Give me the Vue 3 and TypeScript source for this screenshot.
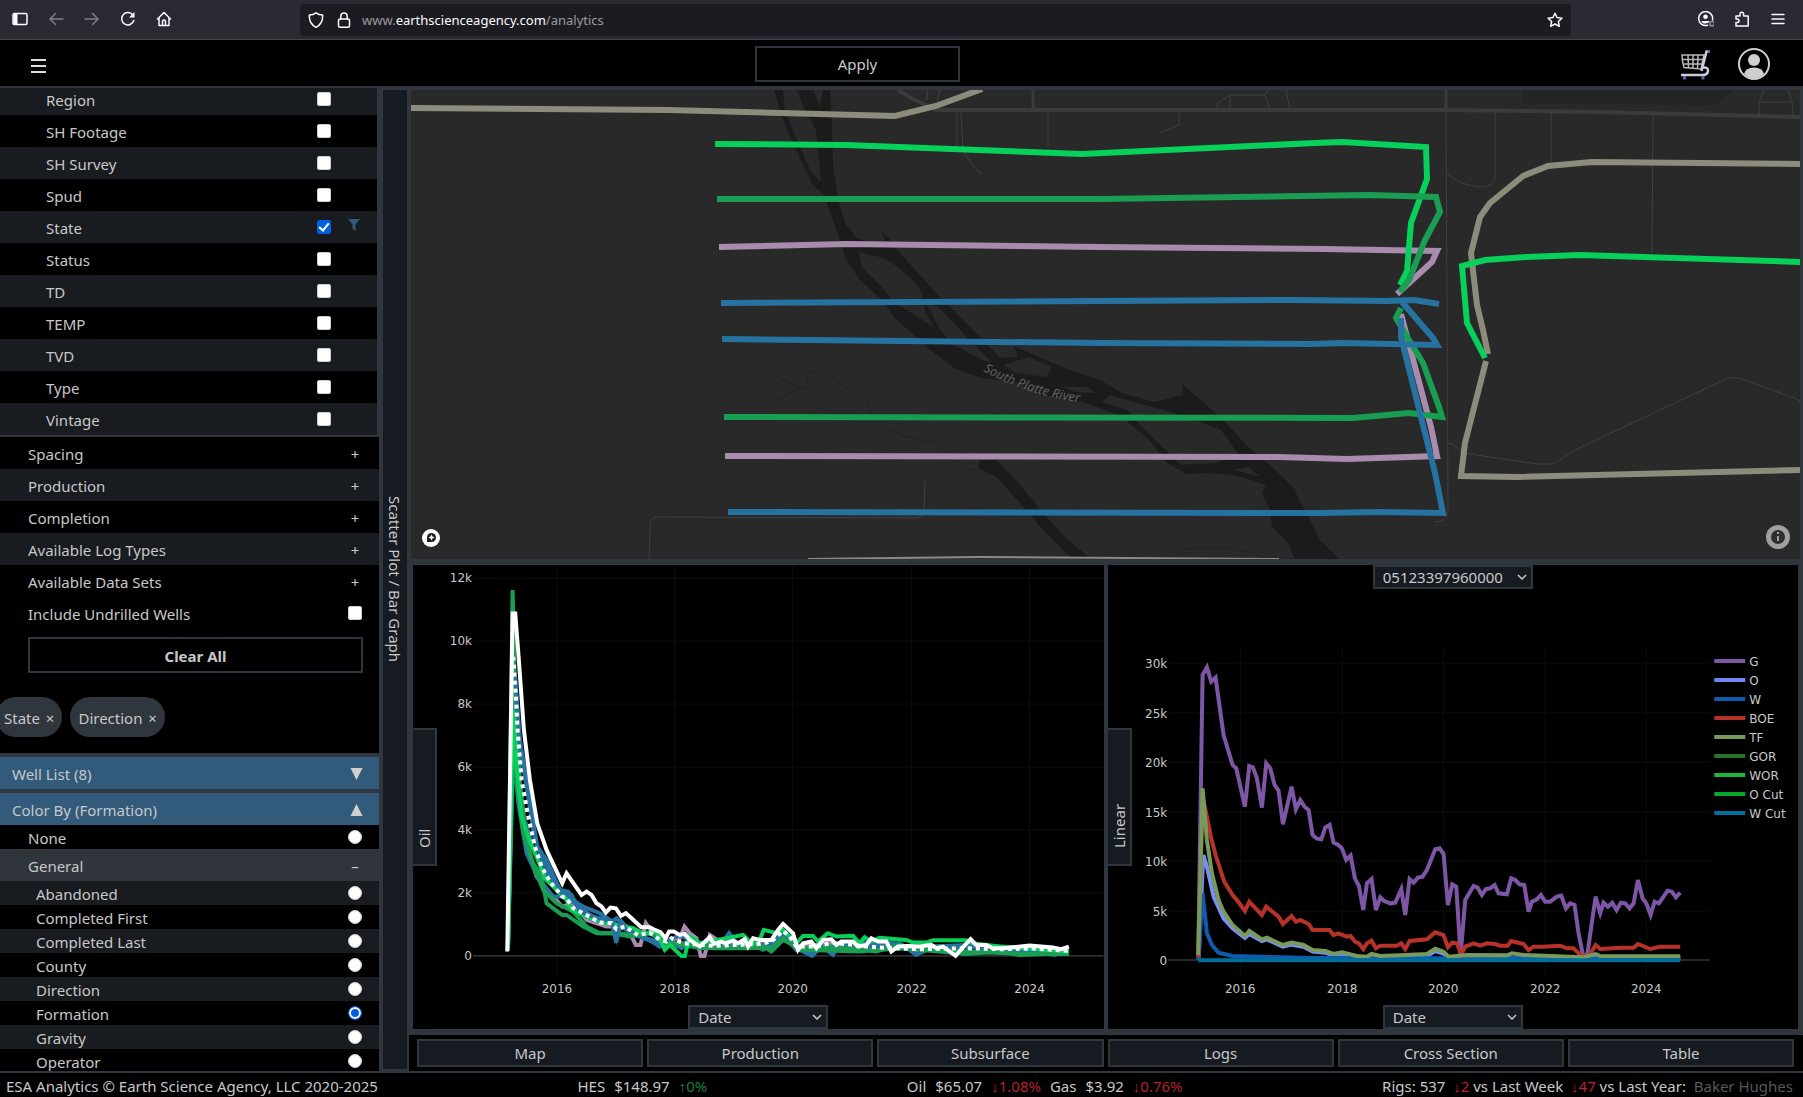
<script setup lang="ts">
import { ref } from 'vue'

interface Field { name: string; on: boolean }
interface Trace { color: string; points: string }
interface Tick { at: number; text: string }

const fields = ref<Field[]>([
  'Region', 'SH Footage', 'SH Survey', 'Spud', 'State', 'Status',
  'TD', 'TEMP', 'TVD', 'Type', 'Vintage',
].map((name) => ({ name, on: name === 'State' })))

const sections = ['Spacing', 'Production', 'Completion', 'Available Log Types', 'Available Data Sets']
const undrilled = ref(false)
const chips = ['State', 'Direction']

const colorBy = ref('Formation')
const colorOptions = ['Abandoned', 'Completed First', 'Completed Last', 'County', 'Direction', 'Formation', 'Gravity', 'Operator']
const views = ['Map', 'Production', 'Subsurface', 'Logs', 'Cross Section', 'Table']

const wells: Trace[] = [
  { color: '#8b8c7c', points: '411,108 668,110 895,116 936,106 982,89' },
  { color: '#8b8c7c', points: '1801,164 1592,162 1548,166 1523,176 1490,203 1480,217 1471,253 1477,305 1483,330 1488,354' },
  { color: '#8b8c7c', points: '1486,361 1465,443 1461,476 1517,477 1801,470' },
  { color: '#a98bae', points: '725,456 1279,457 1347,459 1437,456 1431,427 1401,314' },
  { color: '#179e51', points: '724,417 1353,418 1409,413 1442,417 1439,407 1423,363 1409,340 1396,318 1401,308' },
  { color: '#2673a1', points: '728,512 1320,513 1378,512 1443,513 1435,473 1401,337 1401,318' },
  { color: '#a98bae', points: '719,247 846,244 1100,247 1324,249 1437,251 1432,262 1397,294' },
  { color: '#2673a1', points: '722,339 1100,343 1311,344 1342,343 1437,345 1433,338 1402,302' },
  { color: '#2673a1', points: '721,303 1100,301 1293,300 1387,301 1414,300 1439,304' },
  { color: '#07d05b', points: '715,144 846,145 1082,154 1315,143 1342,142 1426,147 1427,179 1411,223 1407,271 1400,285' },
  { color: '#1a9e54', points: '717,199 1100,199 1369,195 1436,197 1440,212 1425,240 1409,280 1400,292' },
  { color: '#07d05b', points: '1801,262 1580,255 1526,257 1485,260 1462,266 1467,323 1485,358' },
]

const roads = [
  'M957,112 V146', 'M961,112 L963,150 Q970,164 982,175', 'M1048,112 V147', 'M928,90 L926,101', 'M940,90 L937,103',
  'M1179,112 V125 L1160,133', 'M1217,110 V104 L1230,95 H1265 L1270,110', 'M1230,95 V110', 'M1265,95 L1268,90',
  'M1286,90 L1290,110', 'M1446,110 L1448,512 Q1446,522 1434,522', 'M1495,112 V177 Q1494,187 1481,187 Q1462,186 1447,174',
  'M1551,112 V162', 'M1653,115 L1652,253', 'M1759,115 V102 L1764,90', 'M1788,90 L1792,102 L1793,115', 'M1759,102 H1792',
  'M1447,443 L1453,444 L1463,453 L1537,464 H1553 L1575,450 L1728,378 H1739 L1797,399 L1801,403',
  'M649,560 L650,527 Q650,518 656,517 L913,518 Q924,518 924,512 L925,481',
]
const creeks = [
  'M776,377 L800,387 L757,412',
  'M800,387 L806,388 L808,375 Q811,370 818,372 L831,377 L846,388 L864,398 Q871,405 871,413 L878,425 L904,436 L938,443 L951,460 L967,470 H983',
  'M1174,557 L1185,549 L1225,547 L1252,553 L1266,559',
]

// Series points are in thirds of a pixel, measured from each plot's own origin.
const oilTraces: Trace[] = [
  { color: '#a98bae', points: '324,1200 340,420 352,650 375,860 410,980 450,1030 487,1070 520,1060 560,1110 620,1130 680,1130 708,1185 722,1185 738,1120 760,1150 800,1170 840,1165 854,1130 870,1150 890,1165 903,1218 914,1218 930,1155 960,1175 1000,1185 1100,1180 1150,1150 1200,1190 1300,1180 1400,1185 1500,1190 1570,1205 1600,1190 1650,1188 1700,1192 1790,1190 1815,1208 1850,1195 2008,1200' },
  { color: '#2673a1', points: '324,1200 342,350 358,560 385,720 412,890 440,930 480,1020 505,1025 540,1075 580,1100 635,1115 650,1105 680,1135 720,1160 780,1185 840,1190 870,1170 930,1190 970,1175 988,1150 1010,1180 1080,1190 1130,1165 1150,1140 1175,1165 1195,1190 1240,1215 1260,1185 1300,1215 1320,1180 1400,1190 1500,1180 1550,1215 1600,1190 1713,1185 1760,1205 1850,1198 1965,1215 2008,1200' },
  { color: '#2673a1', points: '324,1200 341,450 352,640 372,800 400,900 430,960 470,1010 500,1045 540,1070 580,1110 635,1115 649,1178 665,1115 700,1155 740,1165 780,1190 810,1170 845,1195 880,1175 940,1190 1000,1180 1055,1180 1090,1200 1150,1160 1190,1195 1237,1218 1265,1190 1300,1190 1420,1175 1480,1180 1560,1200 1700,1190 1800,1200 2008,1205' },
  { color: '#2673a1', points: '324,1200 340,600 355,760 380,910 415,985 460,1040 500,1040 550,1070 600,1090 660,1130 720,1160 790,1180 840,1155 900,1190 1080,1185 1115,1180 1150,1155 1190,1200 1400,1195 1600,1195 1800,1190 2008,1200' },
  { color: '#1a9e54', points: '324,1200 338,120 346,440 360,700 380,880 405,960 430,1020 470,1060 520,1085 560,1130 600,1150 640,1150 690,1160 750,1150 800,1180 850,1185 900,1195 1000,1192 1100,1195 1115,1205 1150,1170 1200,1195 1300,1190 1430,1205 1500,1185 1560,1200 1700,1212 1800,1205 1860,1215 2008,1210' },
  { color: '#1a9e54', points: '324,1200 342,500 352,700 370,850 400,940 425,980 440,1060 487,1095 500,1095 550,1130 590,1150 650,1150 700,1155 770,1150 800,1180 880,1180 940,1195 1045,1195 1080,1190 1115,1195 1150,1165 1200,1200 1380,1205 1500,1195 1600,1200 1860,1212 2008,1212' },
  { color: '#07d05b', points: '324,1200 340,480 350,650 365,800 388,870 410,920 435,985 470,1020 500,1050 515,1080 560,1100 620,1120 700,1135 730,1150 770,1145 795,1200 810,1185 845,1218 855,1218 870,1160 900,1180 980,1165 1030,1155 1055,1180 1075,1180 1092,1140 1130,1150 1150,1140 1190,1180 1210,1158 1240,1158 1255,1175 1284,1150 1310,1160 1360,1158 1380,1180 1395,1162 1415,1175 1440,1164 1520,1170 1540,1178 1580,1178 1600,1171 1700,1171 1720,1180 1800,1190 2008,1205' },
  { color: '#2673a1', points: '346,380 362,600 385,740 405,870 430,935 460,985 487,1030 515,1035 540,1085 580,1100 635,1115 649,1165 662,1120 690,1150' },
]
const oilP90 = '322,1205 338,190 346,190 356,320 372,540 390,690 412,820 440,900 487,1000 500,970 545,1035 560,1025 575,1035 590,1060 605,1070 618,1088 632,1073 648,1075 663,1098 678,1090 692,1102 724,1132 750,1132 765,1140 782,1147 797,1165 808,1145 822,1145 840,1155 855,1152 870,1170 900,1190 930,1162 942,1182 965,1175 975,1180 1000,1172 1015,1180 1035,1168 1045,1190 1060,1165 1080,1170 1115,1170 1135,1140 1150,1122 1180,1150 1195,1200 1210,1180 1235,1175 1250,1195 1270,1170 1295,1168 1310,1185 1325,1175 1360,1175 1375,1190 1400,1185 1415,1165 1435,1175 1460,1175 1475,1205 1495,1190 1525,1188 1560,1190 1595,1185 1610,1195 1630,1190 1668,1218 1690,1192 1713,1168 1730,1185 1760,1185 1780,1195 1810,1195 1890,1187 1960,1193 1985,1198 2008,1190'
const oilMean = '340,320 348,440 353,540 365,690 383,790 405,890 425,950 450,995 487,1040 500,1045 520,1075 560,1095 600,1118 635,1120 650,1138 675,1130 715,1156 750,1148 780,1170 800,1175 815,1165 850,1180 940,1188 1080,1182 1115,1175 1150,1143 1170,1160 1190,1190 1250,1190 1300,1178 1400,1190 1480,1195 1560,1198 1700,1195 1800,1198 1900,1196 2008,1203'

const wellTraces: Trace[] = [
  { color: '#7d56a5', points: '294,1215 307,375 320,352 333,395 346,383 370,555 397,645 408,655 434,770 447,648 458,652 470,685 485,773 498,640 510,655 523,705 535,722 548,823 574,710 587,778 600,750 613,770 625,780 637,855 650,866 663,868 675,833 688,825 700,878 713,884 725,895 738,930 751,917 764,985 776,1008 789,1080 800,1000 814,987 827,1080 840,1042 852,1053 870,1060 885,1058 903,1017 915,1095 928,987 940,998 953,983 967,980 980,960 1005,898 1018,895 1030,912 1043,1065 1056,1003 1068,1010 1081,1215 1095,1050 1120,1008 1132,1013 1145,1035 1157,1017 1170,1015 1183,1005 1195,1030 1220,1033 1233,985 1245,990 1258,1003 1272,1005 1285,1085 1295,1055 1310,1048 1322,1035 1335,1055 1350,1055 1370,1040 1383,1037 1397,1075 1410,1060 1423,1065 1435,1150 1448,1215 1461,1215 1486,1040 1500,1090 1510,1058 1523,1070 1536,1058 1549,1080 1562,1058 1575,1060 1588,1075 1600,1060 1613,990 1627,1045 1638,1060 1651,1095 1663,1055 1676,1060 1702,1022 1715,1025 1727,1042 1740,1028' },
  { color: '#7b8df6', points: '295,1228 309,915 320,950 340,1040 370,1105 397,1135 434,1164 447,1152 485,1173 500,1168 548,1190 574,1184 610,1190 637,1205 675,1208 700,1216 725,1212 770,1222 980,1218 1005,1203 1030,1211 1045,1225 1740,1224' },
  { color: '#0f5cae', points: '295,1228 307,1030 320,1150 335,1185 355,1208 397,1218 600,1223 1740,1227' },
  { color: '#b7332a', points: '294,1222 307,740 320,800 333,865 346,915 372,995 397,1035 410,1050 434,1083 447,1055 485,1095 498,1070 535,1100 548,1122 574,1098 587,1115 600,1110 625,1122 637,1140 688,1140 700,1155 713,1150 740,1160 751,1158 764,1175 776,1180 789,1197 800,1180 814,1172 827,1195 840,1187 890,1187 903,1180 915,1197 928,1173 980,1168 1005,1147 1030,1155 1043,1192 1056,1178 1070,1180 1083,1215 1095,1190 1120,1180 1140,1187 1160,1180 1185,1182 1200,1187 1222,1187 1233,1173 1270,1182 1285,1200 1300,1190 1325,1190 1380,1187 1400,1195 1420,1195 1440,1215 1465,1220 1486,1185 1500,1197 1560,1193 1600,1193 1613,1182 1650,1197 1680,1190 1740,1190' },
  { color: '#789a5a', points: '294,1215 307,715 320,870 335,970 355,1050 370,1085 397,1125 434,1158 447,1143 485,1168 500,1163 548,1185 574,1178 610,1185 637,1200 675,1203 700,1212 725,1207 770,1218 800,1220 814,1212 840,1218 900,1216 980,1212 1005,1196 1030,1205 1045,1220 1100,1215 1220,1216 1235,1210 1270,1215 1450,1222 1486,1212 1500,1218 1740,1219' },
  { color: '#006f99', points: '294,1231 1740,1231' },
]

const legend = [
  { name: 'G', color: '#7d56a5' }, { name: 'O', color: '#6f86f5' }, { name: 'W', color: '#0f5cae' },
  { name: 'BOE', color: '#b7332a' }, { name: 'TF', color: '#789a5a' }, { name: 'GOR', color: '#25742a' },
  { name: 'WOR', color: '#1fb73a' }, { name: 'O Cut', color: '#06a52c' }, { name: 'W Cut', color: '#006f99' },
]

const oilY: Tick[] = ['0', '2k', '4k', '6k', '8k', '10k', '12k'].map((text, i) => ({ text, at: Math.round(956 - i * 63.05) }))
const oilX: Tick[] = ['2016', '2018', '2020', '2022', '2024'].map((text, i) => ({ text, at: Math.round(557 + i * 118.2) }))
const wellY: Tick[] = ['0', '5k', '10k', '15k', '20k', '25k', '30k'].map((text, i) => ({ text, at: Math.round(960 - i * 49.5) }))
const wellX: Tick[] = ['2016', '2018', '2020', '2022', '2024'].map((text, i) => ({ text, at: Math.round(1240 + i * 101.5) }))
</script>

<template>
  <div class="window">
    <div class="toolbar">
      <div class="tools">
        <button aria-label="Sidebar"><svg viewBox="0 0 16 16"><rect x="1" y="2.5" width="14" height="11" rx="1.5" class="line" /><path d="M1.5 2.5h4v11h-4z" class="solid" /></svg></button>
        <button aria-label="Back" class="dim"><svg viewBox="0 0 16 16"><path d="M15 8H2M7.5 2.500L2 8l5.500 5.500" class="line" /></svg></button>
        <button aria-label="Forward" class="dim"><svg viewBox="0 0 16 16"><path d="M1 8h13M8.500 2.500L14 8l-5.500 5.500" class="line" /></svg></button>
        <button aria-label="Reload"><svg viewBox="0 0 16 16"><path d="M13.800 9.500A6.200 6.200 0 1 1 12.800 4" class="line" /><path d="M14.500 1v5.500H9z" class="solid" /></svg></button>
        <button aria-label="Home"><svg viewBox="0 0 16 16"><path d="M1.500 8L8 1.500 14.500 8M3 7v7.500h10V7M6.500 14.500V10.500a1.500 1.500 0 0 1 3 0v4" class="line" /></svg></button>
      </div>
      <div class="address">
        <svg viewBox="0 0 16 16"><path d="M8 .8C10 2.300 12 2.900 14.600 3c.4 5.500-1.500 9.800-6.600 12.300C2.900 12.800 1 8.500 1.400 3 4 2.900 6 2.300 8 .8z" class="line" /></svg>
        <svg viewBox="0 0 16 16" class="lock"><rect x="2.500" y="7" width="11" height="8.200" rx="1.500" class="line" /><path d="M4.800 7V4.200a3.200 3.200 0 0 1 6.400 0V7" class="line" /></svg>
        <span class="url">www.<b>earthscienceagency.com</b>/analytics</span>
        <svg viewBox="0 0 16 16"><path d="M8 1.200l2.100 4.400 4.800.6-3.500 3.300.9 4.800L8 12l-4.300 2.300.9-4.800L1.100 6.200l4.800-.6z" class="line" /></svg>
      </div>
      <div class="tools">
        <button aria-label="Account"><svg viewBox="0 0 16 16"><path d="M9.500 14.300A7 7 0 1 1 14.500 9" class="line" /><circle cx="7.500" cy="5.800" r="2.300" class="solid" /><path d="M3.300 10h8.400c-.3 2.200-7 4.500-8.400 0z" class="solid" /><circle cx="14" cy="12.700" r="2.200" class="line faint" /></svg></button>
        <button aria-label="Extensions"><svg viewBox="0 0 16 16"><path d="M2 5h4V3a1.800 1.800 0 0 1 3.600 0v2h4.600v10H2v-3.500h1.200a1.600 1.600 0 0 0 0-3.500H2z" class="line" /></svg></button>
        <button aria-label="Menu"><svg viewBox="0 0 16 16"><path d="M2 3.500h12M2 8h12M2 12.500h12" class="line" /></svg></button>
      </div>
    </div>

    <header class="header">
      <button class="menu" aria-label="Open menu"><svg viewBox="0 0 16 16"><path d="M0 2h15M0 8h15M0 14h15" /></svg></button>
      <button class="apply">Apply</button>
      <div class="account">
        <button aria-label="Cart">
          <svg viewBox="0 0 30 32" class="cart">
            <path d="M2 6h22l-3 14-17-1.500q-2-6-2-12.500zM2 10.500h21M3 15h19M8 6l.5 13M13 6v13.500M18 6l-.5 13.500" />
            <path d="M29 2.500h-2.500L21.500 22" class="handle" /><path d="M23 18.500q5-.5 5 3t-4 4.500H1" class="base" />
            <path d="M27.500 2.500h2.500M4.500 27v3.500M23 27v3.500" class="wheel" />
          </svg>
        </button>
        <button aria-label="Profile">
          <svg viewBox="0 0 32 32" class="user"><circle cx="16" cy="16" r="15" /><circle cx="16" cy="12" r="6" class="fill" /><path d="M6 26q1.500-6.500 10-6.500t10 6.500q-4.500 4.500-10 4.500T6 26z" class="fill" /></svg>
        </button>
      </div>
    </header>

    <main class="body">
      <aside class="sidebar">
        <div class="fields">
          <label v-for="f in fields" :key="f.name" class="row field">
            <span>{{ f.name }}</span>
            <input v-model="f.on" type="checkbox" />
            <span class="extra"><svg v-if="f.on" viewBox="0 0 12 12"><path d="M0 0h12L7.500 5.500V12l-3-2.500v-4z" /></svg></span>
          </label>
        </div>
        <button v-for="s in sections" :key="s" class="row section"><span>{{ s }}</span><span class="sign">+</span></button>
        <label class="row section"><span>Include Undrilled Wells</span><input v-model="undrilled" type="checkbox" /></label>
        <button class="clear">Clear All</button>
        <div class="chips"><button v-for="c in chips" :key="c">{{ c }} <small>×</small></button></div>
        <button class="row bar"><span>Well List (8)</span><svg viewBox="0 0 12 12"><path d="M0 0h12L6 12z" /></svg></button>
        <button class="row bar"><span>Color By (Formation)</span><svg viewBox="0 0 12 12"><path d="M0 12h12L6 0z" /></svg></button>
        <label class="row option none"><span>None</span><input v-model="colorBy" type="radio" name="color" value="None" /></label>
        <button class="row section general"><span>General</span><span class="sign">–</span></button>
        <div class="options">
          <label v-for="o in colorOptions" :key="o" class="row option"><span>{{ o }}</span><input v-model="colorBy" type="radio" name="color" :value="o" /></label>
        </div>
      </aside>

      <button class="rail"><span>Scatter Plot / Bar Graph</span></button>

      <section class="workspace">
        <div class="map">
          <svg viewBox="411 90 1389 469" preserveAspectRatio="xMidYMid slice">
            <path d="M1523,90 H1732 L1716,105 L1523,103 Z" fill="#242424" />
            <path class="river" d="M774,90 L783,90 L785,112 L797,140 L811,172 L821,182 L819,160 L816,130 L805,110 L797,90 L813,90 L820,107 L823,90 L830,90 L832,125 L833,165 L838,200 L846,225 L857,238 L869,243 L888,247 L881,230 L892,242 L896,248 L908,262 L940,297 L980,337 L1000,358 L1018,357 L1014,346 L1034,355 L1070,370 L1100,380 L1122,393 L1154,402 L1183,395 L1182,384 L1201,400 L1225,422 L1248,447 L1270,465 L1293,487 L1306,513 L1320,540 L1340,560 L1295,560 L1288,543 L1272,527 L1270,510 L1262,493 L1266,485 L1234,475 L1208,473 L1187,474 L1167,463 L1149,440 L1122,417 L1100,408 L1083,402 L1043,395 L1016,382 L980,378 L954,368 L927,347 L895,318 L882,300 L860,280 L846,260 L840,240 L824,195 L812,184 L785,125 Z" />
            <path class="river" d="M978,468 L980,460 L996,460 L1018,482 L1043,513 L1065,537 L1092,560 L1070,557 L1043,530 L1020,503 L998,478 Z" />
            <path class="land" d="M859,252 L884,258 L898,267 L913,280 L922,293 L925,310 L933,327 L918,317 L895,303 L878,283 L862,268 Z M925,303 L938,307 L954,323 L976,347 L992,362 L982,360 L954,345 L940,330 L930,310 Z M1003,365 L1029,357 L1052,367 L1047,377 L1016,373 Z M1063,387 L1087,387 L1096,393 L1075,392 Z M1102,402 L1127,410 L1145,430 L1181,465 L1216,463 L1239,455 L1221,430 L1203,423 L1181,415 L1145,405 L1110,395 Z M1234,470 L1248,467 L1261,477 Z" />
            <path v-for="c in creeks" :key="c" :d="c" class="creek" />
            <path v-for="r in roads" :key="r" :d="r" class="road" />
            <path d="M898,90 L913,99 L936,110 H1441 L1600,112 L1801,117" class="highway" />
            <path d="M1033,90 V110 M1446,90 V110" class="highway spur" />
            <path d="M808,559 L980,557 L1279,559" class="edge" />
            <polyline v-for="(w, i) in wells" :key="i" :points="w.points" :stroke="w.color" class="well" />
            <path id="course" d="M983,371 Q1030,397 1092,404" fill="none" />
            <text class="river-name"><textPath href="#course">South Platte River</textPath></text>
            <circle cx="431" cy="538" r="9" fill="#fff" />
            <path d="M427 542v-4.500a4.500 4.500 0 1 1 4.500 4.500z" fill="#222" /><path d="M431.500 534.500l1 2 2 1-2 1-1 2-1-2-2-1 2-1z" fill="#fff" />
            <circle cx="1778" cy="537" r="12" fill="#a0a0a0" /><circle cx="1778" cy="537" r="7" fill="#2f2f2f" />
            <path d="M1778 532v2M1778 536v5" stroke="#a0a0a0" stroke-width="2" />
          </svg>
        </div>

        <div class="charts">
          <div class="panel">
            <svg viewBox="413 565 691 464">
              <path v-for="t in oilY" :key="t.text" :d="`M473 ${t.at}H1104`" class="grid" />
              <path v-for="t in oilX" :key="t.text" :d="`M${t.at} 565V976`" class="grid" />
              <path d="M473 956H1104" class="axis" />
              <text v-for="t in oilY" :key="t.text" x="472" :y="t.at + 4" class="tick end">{{ t.text }}</text>
              <text v-for="t in oilX" :key="t.text" :x="t.at" y="993" class="tick mid">{{ t.text }}</text>
              <g transform="translate(400 550) scale(0.33333)">
                <polyline v-for="(s, i) in oilTraces" :key="i" :points="s.points" :stroke="s.color" class="series" />
                <polyline :points="oilMean" class="series mean" />
                <polyline :points="oilP90" class="series" stroke="#fff" />
              </g>
            </svg>
            <button class="scale">Oil</button>
            <div class="picker bottom"><select aria-label="Horizontal axis"><option>Date</option></select><svg viewBox="0 0 10 6"><path d="M1 1l4 4 4-4" /></svg></div>
          </div>
          <div class="panel">
            <svg viewBox="1108 565 690 464">
              <path v-for="t in wellY" :key="t.text" :d="`M1168 ${t.at}H1710`" class="grid" />
              <path v-for="t in wellX" :key="t.text" :d="`M${t.at} 648V976`" class="grid" />
              <path d="M1168 960H1710" class="axis" />
              <text v-for="t in wellY" :key="t.text" x="1167" :y="t.at + 5" class="tick end">{{ t.text }}</text>
              <text v-for="t in wellX" :key="t.text" :x="t.at" y="993" class="tick mid">{{ t.text }}</text>
              <g transform="translate(1100 550) scale(0.33333)">
                <polyline v-for="(s, i) in wellTraces" :key="i" :points="s.points" :stroke="s.color" class="series" />
              </g>
              <g v-for="(l, i) in legend" :key="l.name">
                <path :d="`M1714 ${661 + i * 19}h31`" :stroke="l.color" stroke-width="4" />
                <text x="1749" :y="666 + i * 19" class="tick">{{ l.name }}</text>
              </g>
            </svg>
            <div class="picker top"><select aria-label="Well"><option>05123397960000</option></select><svg viewBox="0 0 10 6"><path d="M1 1l4 4 4-4" /></svg></div>
            <button class="scale">Linear</button>
            <div class="picker bottom"><select aria-label="Horizontal axis"><option>Date</option></select><svg viewBox="0 0 10 6"><path d="M1 1l4 4 4-4" /></svg></div>
          </div>
        </div>

        <nav class="views"><button v-for="v in views" :key="v">{{ v }}</button></nav>
      </section>
    </main>

    <footer class="footer">
      <span>ESA Analytics © Earth Science Agency, LLC 2020-2025</span>
      <span class="quote"><span>HES</span><span>$148.97</span><span class="up">↑0%</span></span>
      <span class="quote"><span>Oil</span><span>$65.07</span><span class="down">↓1.08%</span><span>Gas</span><span>$3.92</span><span class="down">↓0.76%</span></span>
      <span class="rigs">Rigs: 537 &nbsp;<span class="down">↓2</span> vs Last Week &nbsp;<span class="down">↓47</span> vs Last Year: &nbsp;<a href="#">Baker Hughes</a></span>
    </footer>
  </div>
</template>

<style>
body { background: #000; }
</style>

<style scoped>
.window { display: flex; flex-direction: column; height: 100vh; overflow: hidden; background: #000; color: #c8c8c8; font: 15px/20px "Noto Sans", "Open Sans", sans-serif; }
.window * { box-sizing: border-box; }
button { margin: 0; padding: 0; border: 0; background: none; color: inherit; font: inherit; cursor: pointer; }
svg { display: block; }

.toolbar { display: flex; flex: none; align-items: center; height: 40px; padding: 0 17px 2px 12px; background: #2b2a33; border-bottom: 1px solid #45444c; }
.tools { display: flex; gap: 20px; }
.tools svg, .address svg { width: 16px; height: 16px; }
.line { fill: none; stroke: #fbfbfe; stroke-width: 1.5; stroke-linecap: round; stroke-linejoin: round; }
.solid { fill: #fbfbfe; }
.faint { stroke: #8d8d94; }
.dim { opacity: .4; }
.address { display: flex; flex: 1; align-items: center; height: 32px; margin: 2px 127px 0 128px; padding: 0 8px; border-radius: 4px; background: #1c1b22; }
.lock { margin: 0 10px 0 12px; }
.url { flex: 1; color: #9a9aa0; font-size: 13px; }
.url b { color: #fbfbfe; font-weight: 400; }

.header { display: flex; flex: none; align-items: center; justify-content: space-between; height: 48px; padding: 1px 33px 0 31px; border-bottom: 2px solid #30363d; }
.menu { padding-top: 5px; }
.menu svg { width: 16px; height: 16px; stroke: #dedede; stroke-width: 2; }
.apply { width: 205px; height: 36px; border: 2px solid #30363d; }
.account { display: flex; align-items: center; gap: 28px; padding-left: 12px; }
.account button:first-child { padding-top: 2px; }
.cart { width: 30px; height: 32px; fill: none; stroke: #b9b9b9; stroke-width: 1.500; }
.cart .handle, .cart .base { stroke: #cfcbdc; stroke-width: 2.500; }
.cart .wheel { stroke: #4a6fa8; stroke-width: 3; }
.user { width: 32px; height: 32px; fill: none; stroke: #cfcfcf; stroke-width: 2; }
.user .fill { fill: #cfcfcf; stroke: none; }

.body { display: flex; flex: 1; min-height: 0; }
.sidebar { flex: none; width: 383px; overflow: hidden; border-right: 4px solid #30363d; }
.fields { margin-top: -5px; border-right: 2px solid #30363d; border-bottom: 2px solid #30363d; }
.row { display: flex; align-items: center; width: 100%; height: 32px; text-align: left; }
.row > span:first-child { flex: 1; padding-top: 2px; }
.field { padding: 0 12px 0 46px; }
.field:nth-child(odd), .option:nth-child(odd) { background: #181b1f; }
.extra { width: 34px; padding: 0 5px 4px 17px; }
.extra svg { width: 12px; height: 12px; fill: #34587a; }
.section { padding: 0 17px 0 28px; }
.section:nth-of-type(even) { background: #181b1f; }
.sign { width: 14px; padding-top: 2px; text-align: center; }
input { flex: none; width: 14px; height: 14px; margin: 0; border: 1px solid #d0d0d4; background: #fff; appearance: none; }
input[type="checkbox"] { border-radius: 2px; }
input[type="radio"] { border-radius: 50%; }
input[type="checkbox"]:checked { display: grid; place-items: center; border-color: #0060df; background: #0060df; }
input[type="checkbox"]:checked::before { content: ""; width: 4px; height: 8px; margin-bottom: 2px; border: solid #fff; border-width: 0 2px 2px 0; transform: rotate(40deg); }
input[type="radio"]:checked { border: 1px solid #0060df; background: #0060df; box-shadow: inset 0 0 0 2px #fff; }
.clear { display: block; width: 335px; height: 36px; margin: 8px 0 24px 28px; padding-top: 2px; border: 2px solid #30363d; font-weight: 700; }
.chips { display: flex; gap: 8px; margin: 0 0 16px -4px; }
.chips button { height: 40px; padding: 2px 8px 0; border-radius: 20px; background: #30363d; white-space: nowrap; }
.chips small { margin-left: 2px; font-size: 15px; }
.bar { height: 36px; padding: 0 16px 0 12px; border-top: 4px solid #30363d; background: #315a7b; }
.bar svg { width: 13px; height: 14px; padding-top: 2px; fill: #d0d0d0; }
.sidebar .general { background: #30343b; }
.option { height: 24px; padding: 0 17px 0 36px; }
.sidebar .none { padding-left: 28px; background: #000; }

.rail { display: flex; flex: none; align-items: center; justify-content: center; width: 24px; margin: 2px 0; background: #161b22; box-shadow: 0 -2px #30363d, 0 2px #30363d; }
.rail span { writing-mode: vertical-rl; }

.workspace { display: flex; flex: 1; flex-direction: column; min-width: 0; background: #30363d; }
.map { flex: 469 1 0; min-height: 0; margin: 2px 3px 6px 4px; overflow: hidden; background: #292929; }
.map svg, .panel > svg { width: 100%; height: 100%; }
.river { fill: #1b1b1b; }
.land { fill: #292929; }
.creek { fill: none; stroke: #222; stroke-width: 1; }
.road { fill: none; stroke: #404040; stroke-width: 1; }
.highway { fill: none; stroke: #3b3b3b; stroke-width: 4; }
.spur { stroke-width: 3; }
.edge { fill: none; stroke: #8b8c7c; stroke-width: 2; }
.well { fill: none; stroke-width: 6; }
.river-name { fill: #606060; font-size: 13px; font-style: italic; }

.charts { display: flex; flex: 464 1 0; gap: 4px; min-height: 0; margin: 0 5px 6px 6px; }
.panel { position: relative; flex: 1; min-width: 0; background: #000; }
.grid { stroke: #0e0e0e; }
.axis { stroke: #4a4a4a; }
.tick { fill: #c8c8c8; font: 12px "DejaVu Sans", sans-serif; }
.end { text-anchor: end; }
.mid { text-anchor: middle; }
.series { fill: none; stroke-width: 12; }
.mean { stroke: #fff; stroke-dasharray: 12 12; }
.scale { position: absolute; top: calc(50% - 69px); left: 0; width: 24px; height: 138px; padding: 16px 0; border: 2px solid #30363d; border-right-width: 0; background: #161b22; writing-mode: vertical-rl; transform: rotate(180deg); text-align: left; line-height: 20px; }
.picker { position: absolute; left: 50%; transform: translateX(-50%); }
.picker select { display: block; width: 100%; height: 24px; padding: 0 8px; border: 2px solid #30363d; border-radius: 0; background: #161b22; color: inherit; font: inherit; line-height: 20px; appearance: none; }
.picker svg { position: absolute; top: 9px; right: 6px; width: 10px; height: 6px; fill: none; stroke: #c8c8c8; stroke-width: 1.500; pointer-events: none; }
.top { top: 0; width: 160px; }
.bottom { bottom: 0; width: 140px; }

.views { display: flex; flex: none; gap: 4px; height: 36px; margin-left: 2px; padding: 4px 9px 4px 8px; background: #000; }
.views button { flex: 1; border: 2px solid #30363d; background: #161b22; }

.footer { display: flex; flex: none; align-items: center; justify-content: space-between; height: 26px; padding: 1px 10px 0 6px; border-top: 2px solid #30363d; white-space: nowrap; }
.quote { display: flex; gap: 9px; }
.up { color: #1f7f3f; }
.down { color: #b5232b; }
.rigs a { color: #55585c; text-decoration: none; }
</style>
